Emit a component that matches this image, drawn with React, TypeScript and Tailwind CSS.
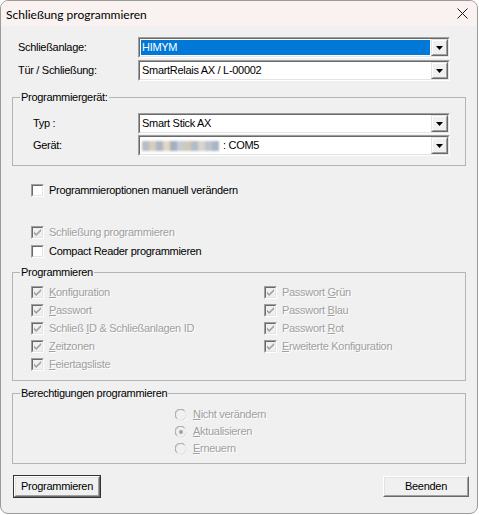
import React from "react";

const font = "font-['Liberation_Sans',Arial,sans-serif] text-[11px] leading-[13px] tracking-[-0.3px]";
const dis = "text-[#a0a0a0] [text-shadow:1px_1px_0_#ffffff]";

const DropButton = () => (
  <div className="w-[17px] border border-t-[#e3e3e3] border-l-[#e3e3e3] border-b-[#696969] border-r-[#696969]">
    <div className="h-full bg-[#f0f0f0] border border-t-white border-l-white border-b-[#a0a0a0] border-r-[#a0a0a0] flex items-center justify-center">
      <svg width="7" height="4" viewBox="0 0 7 4">
        <path d="M0 0h7L3.5 4z" fill="#000" />
      </svg>
    </div>
  </div>
);

const Combo = ({ children, selected }: { children: React.ReactNode; selected?: boolean }) => (
  <div className="w-[312px] h-[21px] border border-t-[#a0a0a0] border-l-[#a0a0a0] border-b-white border-r-white">
    <div className="h-full bg-white border border-t-[#696969] border-l-[#696969] border-b-[#e3e3e3] border-r-[#e3e3e3] flex">
      <div className="flex-1 p-[1px] flex">
        <div className={"flex-1 flex items-center px-[1px] " + (selected ? "bg-[#0078d7] text-white" : "text-black")}>{children}</div>
      </div>
      <DropButton />
    </div>
  </div>
);

const Box = ({ checked, disabled }: { checked?: boolean; disabled?: boolean }) => (
  <div className="w-[13px] h-[13px] shrink-0 border border-t-[#a0a0a0] border-l-[#a0a0a0] border-b-white border-r-white">
    <div className={"w-full h-full border border-t-[#696969] border-l-[#696969] border-b-[#e3e3e3] border-r-[#e3e3e3] flex items-center justify-center " + (disabled ? "bg-[#f0f0f0]" : "bg-white")}>
      {checked && (
        <svg width="7" height="7" viewBox="0 0 7 7">
          <path d="M0 2.5l2.2 2.3L7 0v2.2L2.2 7 0 4.7z" fill={disabled ? "#a0a0a0" : "#000"} />
        </svg>
      )}
    </div>
  </div>
);

const Check = ({ label, checked, disabled }: { label: React.ReactNode; checked?: boolean; disabled?: boolean }) => (
  <div className="flex items-center h-[13px]">
    <Box checked={checked} disabled={disabled} />
    <span className={"ml-[5px] whitespace-nowrap " + (disabled ? dis : "text-black")}>{label}</span>
  </div>
);

const Radio = ({ label, checked }: { label: React.ReactNode; checked?: boolean }) => (
  <div className="flex items-center h-[13px]">
    <svg width="12" height="12" viewBox="0 0 12 12" className="shrink-0">
      <circle cx="6" cy="6" r="5.5" fill="#f0f0f0" stroke="#c8c8c8" />
      <path d="M1.6 9.2A5 5 0 0 1 9.2 1.6" fill="none" stroke="#a0a0a0" />
      <path d="M10.4 2.8A5 5 0 0 1 2.8 10.4" fill="none" stroke="#ffffff" />
      {checked && <circle cx="6" cy="6" r="2" fill="#a0a0a0" />}
    </svg>
    <span className={"ml-[6px] whitespace-nowrap " + dis}>{label}</span>
  </div>
);

const U = ({ children }: { children: React.ReactNode }) => <span className="underline underline-offset-[1px]">{children}</span>;

const Group = ({ title, className, children }: { title: string; className: string; children: React.ReactNode }) => (
  <fieldset className={"border border-[#b4b4b4] mx-[11px] " + className}>
    <legend className="ml-[7px] px-[1px] text-black">{title}</legend>
    {children}
  </fieldset>
);

const Button = ({ label, isDefault }: { label: string; isDefault?: boolean }) => (
  <div className={"w-[88px] h-[23px] border " + (isDefault ? "border-[#333333]" : "border-transparent")}>
    <div className="h-full border border-t-white border-l-white border-b-[#696969] border-r-[#696969]">
      <div className="h-full bg-[#f0f0f0] border border-t-[#e3e3e3] border-l-[#e3e3e3] border-b-[#a0a0a0] border-r-[#a0a0a0] flex items-center justify-center text-black">
        {label}
      </div>
    </div>
  </div>
);

const blur = ["#b8bec6", "#d6cdbd", "#aeb6c1", "#e0d6c6", "#a4afbd", "#c6ccd1", "#d2c6b8", "#b2bbc6", "#d8d4cc", "#bcc3cb", "#aab4c2"];

export default function App() {
  return (
    <div className="w-[479px] h-[515px] bg-white">
      <div className={"w-[478px] h-[514px] border border-[#9b9b9b] rounded-[8px] overflow-hidden bg-[#f0f0f0] " + font}>
        {/* Title bar */}
        <div className="h-[25px] bg-[#f9f2f1] flex items-center justify-between pl-[5px] pr-[9px]">
          <span className="font-['Lato',sans-serif] text-[12px] tracking-normal text-black pt-[1px]">Schließung programmieren</span>
          <svg width="11" height="11" viewBox="0 0 11 11">
            <path d="M0.5 0.5l10 10M10.5 0.5l-10 10" stroke="#1a1a1a" strokeWidth="1" />
          </svg>
        </div>

        <div className="pt-[11px] flex flex-col gap-[2px] pl-[17px]">
          <div className="flex items-center">
            <span className="w-[120px] text-black">Schließanlage:</span>
            <Combo selected>HIMYM</Combo>
          </div>
          <div className="flex items-center">
            <span className="w-[120px] text-black">Tür / Schließung:</span>
            <Combo>SmartRelais AX / L-00002</Combo>
          </div>
        </div>

        <Group title="Programmiergerät:" className="mt-[10px] pb-[9px]">
          <div className="pt-[9px] pl-[20px] flex flex-col gap-[1px]">
            <div className="flex items-center">
              <span className="w-[105px] text-black">Typ :</span>
              <Combo>Smart Stick AX</Combo>
            </div>
            <div className="flex items-center">
              <span className="w-[105px] text-black">Gerät:</span>
              <Combo>
                <span className="flex h-[10px] blur-[1px]">
                  {blur.map((c, i) => (
                    <span key={i} className="w-[7px] h-full" style={{ background: c }} />
                  ))}
                </span>
                <span className="ml-[4px]">: COM5</span>
              </Combo>
            </div>
          </div>
        </Group>

        <div className="pl-[30px]">
          <div className="mt-[18px]">
            <Check label="Programmieroptionen manuell verändern" />
          </div>
          <div className="mt-[29px] flex flex-col gap-[6px]">
            <Check label="Schließung programmieren" checked disabled />
            <Check label="Compact Reader programmieren" />
          </div>
        </div>

        <Group title="Programmieren" className="mt-[8px] pb-[9px]">
          <div className="pt-[7px] pl-[18px] grid grid-cols-[233px_1fr] gap-y-[5px]">
            <Check label={<><U>K</U>onfiguration</>} checked disabled />
            <Check label={<>Passwort <U>G</U>rün</>} checked disabled />
            <Check label={<><U>P</U>asswort</>} checked disabled />
            <Check label={<>Passwort <U>B</U>lau</>} checked disabled />
            <Check label={<>Schließ <U>I</U>D &amp; Schließanlagen ID</>} checked disabled />
            <Check label={<>Passwort <U>R</U>ot</>} checked disabled />
            <Check label={<><U>Z</U>eitzonen</>} checked disabled />
            <Check label={<><U>E</U>rweiterte Konfiguration</>} checked disabled />
            <Check label={<><U>F</U>eiertagsliste</>} checked disabled />
          </div>
        </Group>

        <Group title="Berechtigungen programmieren" className="mt-[6px] pb-[8px]">
          <div className="pt-[8px] pl-[162px] flex flex-col gap-[4px]">
            <Radio label={<><U>N</U>icht verändern</>} />
            <Radio label={<><U>A</U>ktualisieren</>} checked />
            <Radio label={<><U>E</U>rneuern</>} />
          </div>
        </Group>

        <div className="mt-[11px] pl-[12px] pr-[7px] flex justify-between">
          <Button label="Programmieren" isDefault />
          <Button label="Beenden" />
        </div>
      </div>
    </div>
  );
}
